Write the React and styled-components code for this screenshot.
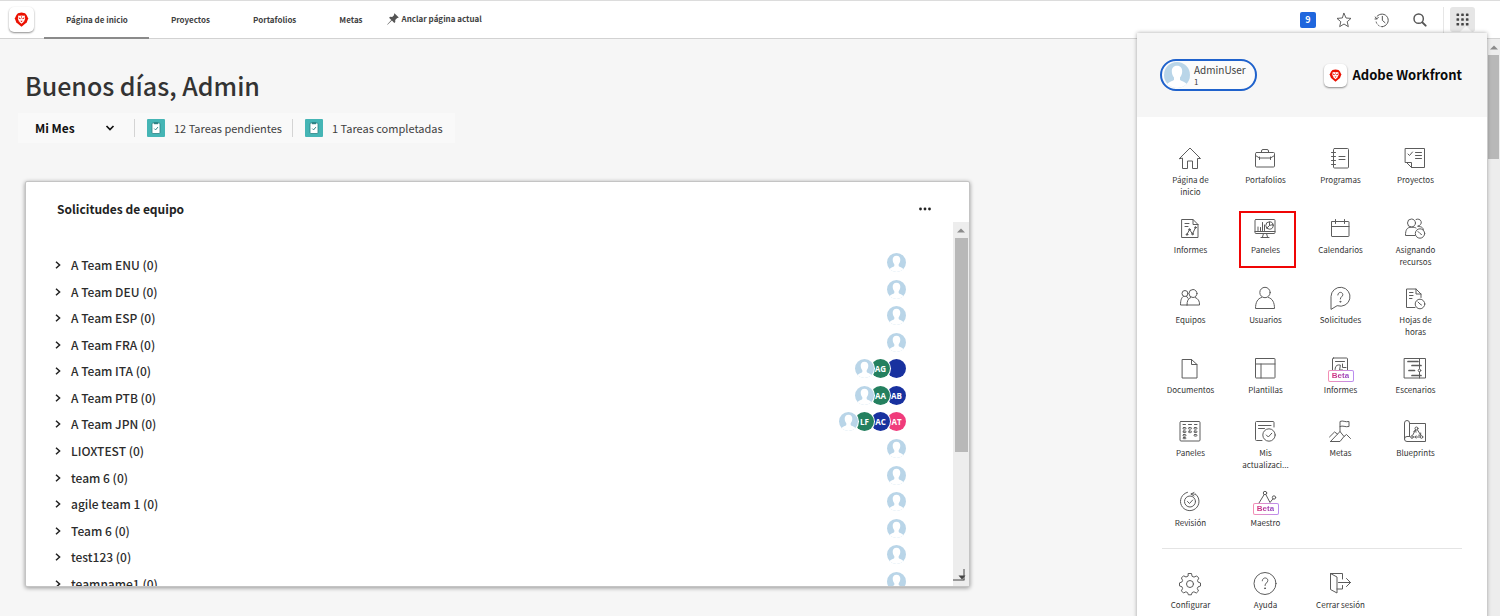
import React from 'react';
import styled, { createGlobalStyle } from 'styled-components';

const GlobalStyle = createGlobalStyle`
  *, *::before, *::after { box-sizing: border-box; }
  html, body { height: 100%; overflow: hidden; }
  body {
    margin: 0;
    background: #f6f6f6;
    color: #3f3f3f;
    font-family: "Noto Sans CJK SC", "Noto Sans", sans-serif;
    font-size: 13px;
  }
  #root { height: 100%; }
  button, select { font: inherit; color: inherit; background: none; border: 0; padding: 0; margin: 0; cursor: pointer; }
  a { color: inherit; text-decoration: none; }
  ul { list-style: none; margin: 0; padding: 0; }
  h1, h2, p { margin: 0; }
  svg { display: block; }
`;

const Page = styled.div`
  display: flex;
  flex-direction: column;
  height: 100%;
`;

/* ---------- top bar ---------- */

const TopBar = styled.header`
  display: flex;
  align-items: center;
  flex: none;
  height: 39px;
  padding: 0 25px 0 9px;
  background: #fff;
  border-top: 1px solid #dcdcdc;
  border-bottom: 1px solid #d2d2d2;
`;

const LogoTile = styled.span`
  display: flex;
  align-items: center;
  justify-content: center;
  flex: none;
  width: ${(p) => p.$size}px;
  height: ${(p) => p.$size}px;
  border-radius: 5px;
  background: #fff;
  box-shadow: 0 1px 2px rgba(0, 0, 0, 0.45);
`;

const Tabs = styled.nav`
  display: flex;
  align-self: stretch;
  margin-left: 10px;
`;

const Tab = styled.a`
  display: flex;
  align-items: center;
  height: 38px;
  padding: 1px 21px 0 22px;
  font-size: 8px;
  font-weight: 700;
  white-space: nowrap;
  border-bottom: 2px solid ${(p) => (p.$active ? '#8a8a8a' : 'transparent')};
`;

const PinButton = styled.button`
  display: flex;
  align-items: center;
  gap: 3px;
  margin-left: 3px;
  padding-bottom: 2px;
  font-size: 8px;
  font-weight: 700;
  line-height: 16px;
  white-space: nowrap;
`;

const Tools = styled.div`
  display: flex;
  align-items: center;
  align-self: stretch;
  margin-left: auto;
`;

const Badge = styled.button`
  width: 16px;
  height: 16px;
  margin-right: 20px;
  border-radius: 2px;
  background: #1f66dd;
  color: #fff;
  font-size: 9px;
  font-weight: 700;
  line-height: 16px;
`;

const ToolButton = styled.button`
  display: flex;
  align-items: center;
  justify-content: center;
  width: 16px;
  height: 16px;
  margin-right: ${(p) => p.$gap}px;
  color: #555;
`;

const ToolRule = styled.span`
  align-self: flex-end;
  width: 1px;
  height: 31px;
  margin-right: 6px;
  background: #e6e6e6;
`;

const AppsButton = styled.button`
  position: relative;
  display: flex;
  align-items: center;
  justify-content: center;
  width: 25px;
  height: 25px;
  border-radius: 3px;
  background: #e6e6e6;
  color: #444;

  &::after {
    content: '';
    position: absolute;
    right: 3px;
    bottom: 0;
    border: 6px solid transparent;
    border-top: 0;
    border-bottom-color: #f7f7f7;
  }
`;

/* ---------- home page ---------- */

const Body = styled.div`
  display: flex;
  flex: 1;
  min-height: 0;
`;

const Main = styled.main`
  flex: 1;
  min-width: 0;
  padding: 26px 0 30px 25px;
`;

const Greeting = styled.h1`
  font-size: 25px;
  font-weight: 500;
  line-height: 40px;
  color: #333;
`;

const Stats = styled.div`
  display: flex;
  align-items: center;
  width: fit-content;
  height: 30px;
  margin: 8px 0 0 -7px;
  padding: 0 12px 0 17px;
  background: #f9f9f9;
`;

const PeriodField = styled.label`
  position: relative;
  width: 80px;
  height: 20px;
  color: #111;

  svg { position: absolute; right: 0; top: 5px; pointer-events: none; }
`;

const PeriodSelect = styled.select`
  width: 80px;
  height: 20px;
  appearance: none;
  font-size: 12px;
  font-weight: 700;
  line-height: 20px;
`;

const Stat = styled.div`
  display: flex;
  align-items: center;
  gap: 9px;
  height: 18px;
  margin-left: ${(p) => p.$gap}px;
  padding-left: 12px;
  border-left: 1px solid #d4d4d4;
  font-size: 11px;
  line-height: 18px;
`;

const Card = styled.section`
  display: flex;
  flex-direction: column;
  width: 63vw;
  height: 406px;
  margin-top: 38px;
  border: 1px solid #c4c4c4;
  border-radius: 2px;
  background: #fff;
  box-shadow: 0 1px 4px rgba(0, 0, 0, 0.4);
`;

const CardHeader = styled.div`
  display: flex;
  align-items: center;
  justify-content: space-between;
  height: 40px;
  padding: 14px 38px 0 31px;
`;

const CardTitle = styled.h2`
  font-size: 12px;
  font-weight: 700;
  line-height: 20px;
  color: #222;
`;

const MoreButton = styled.button`
  display: flex;
  align-items: center;
  height: 20px;
  color: #222;
`;

const Scroller = styled.div`
  position: relative;
  display: flex;
  flex: 1;
  min-height: 0;
`;

const ListViewport = styled.div`
  flex: 1;
  overflow: hidden;
`;

const TeamList = styled.ul`
  display: grid;
  grid-auto-rows: 1fr;
  height: 375px;
  padding: 30px 47px 0 29px;
`;

const TeamRow = styled.li`
  display: flex;
  align-items: center;
  justify-content: space-between;
`;

const TeamToggle = styled.button`
  display: flex;
  align-items: center;
  gap: 10px;
  font-size: 12px;
  font-weight: 500;
  line-height: 20px;
  color: #2c2c2c;
`;

const Avatars = styled.div`
  display: flex;
  flex-direction: row-reverse;
  align-items: center;
  padding-bottom: 5px;
`;

const Avatar = styled.span`
  position: relative;
  display: flex;
  align-items: center;
  justify-content: center;
  flex: none;
  width: 19px;
  height: 19px;
  border-radius: 50%;
  background: ${(p) => p.$color || '#fff'};
  box-shadow: 0 0 0 1px #fff;
  color: #fff;
  font-family: "Open Sans", sans-serif;
  font-size: 8px;
  font-weight: 700;

  & + & { margin-right: -3px; }
`;

const Bar = styled.div`
  display: flex;
  flex-direction: column;
  align-items: center;
  flex: none;
  width: ${(p) => p.$width}px;
  background: #ededed;
  color: #8b8b8b;
`;

const BarArrow = styled.span`
  display: flex;
  align-items: center;
  justify-content: center;
  height: 16px;
`;

const BarThumb = styled.span`
  width: ${(p) => p.$width}px;
  height: ${(p) => p.$height};
  background: #b8b8b8;
`;

const ResizeGrip = styled.span`
  position: absolute;
  right: 3px;
  bottom: 5px;
  color: #444;
`;

/* ---------- main menu ---------- */

const MenuPanel = styled.aside`
  position: absolute;
  top: 33px;
  right: 13px;
  width: 350px;
  min-height: calc(100% - 33px);
  background: #fff;
  box-shadow: 0 0 4px rgba(0, 0, 0, 0.35);
`;

const MenuHeader = styled.div`
  display: flex;
  align-items: center;
  justify-content: space-between;
  height: 84px;
  padding: 0 25px 0 23px;
  background: #f6f6f6;
`;

const UserButton = styled.button`
  display: flex;
  align-items: center;
  gap: 4px;
  width: 97px;
  height: 32px;
  padding: 0 2px;
  border: 2px solid #1f62cc;
  border-radius: 16px;
  background: #fbfbfb;
  text-align: left;
`;

const UserName = styled.span`
  display: flex;
  flex-direction: column;
  font-size: 10px;
  line-height: 12px;
`;

const UserDetail = styled.span`
  font-size: 8px;
  line-height: 11px;
`;

const Brand = styled.div`
  display: flex;
  align-items: center;
  gap: 5px;
  font-size: 13px;
  font-weight: 700;
  line-height: 20px;
  color: #0a0a0a;
  white-space: nowrap;
`;

const MenuGrid = styled.nav`
  display: grid;
  grid-template-columns: repeat(4, 75px);
  row-gap: 16px;
  padding: ${(p) => p.$top}px 34px 14px 16px;
`;

const MenuItem = styled.a`
  position: relative;
  display: flex;
  flex-direction: column;
  align-items: center;
  gap: 2px;
`;

const MenuIcon = styled.span`
  position: relative;
  display: flex;
  align-items: center;
  justify-content: center;
  height: 28px;
  color: #5c5c5c;
`;

const MenuLabel = styled.span`
  min-height: 17px;
  max-width: ${(p) => (p.$wide ? 70 : 50)}px;
  font-size: 8px;
  line-height: 12px;
  text-align: center;
  color: #333;
`;

const Beta = styled.span`
  position: absolute;
  left: 50%;
  bottom: 0;
  width: 26px;
  height: 12px;
  margin-left: -13px;
  border: 1px solid transparent;
  border-radius: 2px;
  background: linear-gradient(#fff, #fff) padding-box, linear-gradient(90deg, #f58fb4, #b98cf0) border-box;
  font-family: "Liberation Sans", sans-serif;
  font-size: 8px;
  font-weight: 700;
  line-height: 10px;
  text-align: center;

  span {
    background: linear-gradient(90deg, #d8317a, #8d46c8);
    background-clip: text;
    color: transparent;
  }
`;

const Highlight = styled.span`
  position: absolute;
  top: -3px;
  left: 11px;
  width: 57px;
  height: 57px;
  border: 2px solid #f00505;
`;

const MenuRule = styled.hr`
  height: 1px;
  margin: 0 25px;
  border: 0;
  background: #e4e4e4;
`;

/* ---------- drawings ---------- */

const Line = ({ size = 24, width = 1, box = '0 0 24 24', children }) => (
  <svg width={size} height={size} viewBox={box} overflow="visible" fill="none" stroke="currentColor" strokeWidth={width} strokeLinejoin="round" strokeLinecap="round" aria-hidden="true">
    {children}
  </svg>
);

const Lion = ({ size }) => (
  <svg width={size} height={size} viewBox="0 0 16 16" aria-hidden="true">
    <path d="M4.200 1.200 8 .6l3.800.6 1.600 1.900 1.800 3.700-1.700 4.400L8 15.600l-5.500-4.400L.8 6.800l1.800-3.700z" fill="#eb1000" />
    <path d="M4.600 3.800 6 4.100 8 3.600l2 .5 1.400-.3.500 3-1.100 3.400L8 12.600l-2.800-2.400-1.100-3.400z" fill="#fff" />
    <path d="M4.900 5.600l2.200 1-.2 1.200-1.800-.8zM11.100 5.600l-2.200 1 .2 1.200 1.800-.8zM6.700 9.300h2.600L8 10.800zM7.700 4h.6v2.800h-.6zM5 8.600l1 1.800-.9-.5zM11 8.600l-1 1.800.9-.5z" fill="#eb1000" />
  </svg>
);

const Silhouette = ({ size, full }) => (
  <svg width={size} height={size} viewBox="0 0 20 20" aria-hidden="true">
    <defs>
      <clipPath id={full ? 'disc-full' : 'disc'}><circle cx="10" cy="10" r="10" /></clipPath>
    </defs>
    <g clipPath={`url(#${full ? 'disc-full' : 'disc'})`}>
      <rect width="20" height="20" fill="#b9d5e8" />
      <path d="M10 2.800c-2.900 0-4 2-4 4.400 0 2 .7 3.600 1.700 4.700v1.800c-.7 1-3.700 1.500-5.700 3.600V20h16v-2.700c-2-2.100-5-2.600-5.700-3.600v-1.800c1-1.100 1.700-2.700 1.700-4.700 0-2.400-1.100-4.400-4-4.400z" fill="#fff" />
    </g>
  </svg>
);

const Clipboard = () => (
  <svg width="18" height="18" viewBox="0 0 18 18" aria-hidden="true">
    <rect width="18" height="18" rx="1" fill="#45b5b5" />
    <rect x="5" y="4" width="8" height="10.500" rx="1" fill="#fff" stroke="#2f8183" strokeWidth=".8" />
    <rect x="7" y="3.200" width="4" height="2" fill="#2f8183" />
    <path d="M7.300 9.600l1.300 1.300 2.300-2.800" fill="none" stroke="#2f8183" strokeWidth="1" />
  </svg>
);

const Pin = () => (
  <svg width="12" height="12" viewBox="0 0 12 12" aria-hidden="true">
    <path d="M7.400.2l4.400 4.400-1.100.4-.5-.1-2 2 .1 2-1 1L4.900 7.600.5 11.700l-.3-.3L4.300 7 2.100 4.700l1-1 2.100.2 2-2L7 1.200z" fill="#555" />
  </svg>
);

const Triangle = () => (
  <svg width="8" height="5" viewBox="0 0 8 5" aria-hidden="true"><path d="M0 4.500 4 .5l4 4z" fill="currentColor" /></svg>
);

const Dots = () => (
  <svg width="12" height="4" viewBox="0 0 12 4" aria-hidden="true">
    {[1.500, 6, 10.500].map((x) => <circle key={x} cx={x} cy="2" r="1.400" fill="currentColor" />)}
  </svg>
);

const AppDots = () => (
  <svg width="13" height="13" viewBox="0 0 13 13" aria-hidden="true">
    {[0.500, 5.200, 9.900].map((y) => [0.500, 5.200, 9.900].map((x) => <rect key={`${x}-${y}`} x={x} y={y} width="2.600" height="2.600" rx=".6" fill="currentColor" />))}
  </svg>
);

const Chevron = () => (
  <svg width="6" height="8" viewBox="0 0 6 8" fill="none" stroke="#222" strokeWidth="1.500" aria-hidden="true"><path d="M1 .7 4.600 4 1 7.300" /></svg>
);

const icons = {
  home: <><path d="M2.500 12.500 13 2l10.500 10.500h-3v10h-5V15h-5v7.500h-5v-10z" /></>,
  briefcase: <><rect x="3.500" y="6.500" width="19" height="14.500" rx="1" /><path d="M9.500 6.500V5A1.500 1.500 0 0 1 11 3.500h4A1.500 1.500 0 0 1 16.500 5v1.500M3.500 9.500l4 2.500h11l4-2.500M7.500 11v2.500M18.500 11v2.500" /></>,
  notebook: <><rect x="6.500" y="2.500" width="15" height="19.500" rx="1" /><path d="M4.500 6.500h4M4.500 10.500h4M4.500 14.500h4M4.500 18.500h4M12 10.500h6M12 13.500h6" /></>,
  project: <><path d="M3.500 2.500h19v19H9.500l-5-5h-1z" /><path d="M4.500 16.500h5v5M6 8l1.500 1.500L10.500 6M13.500 6.500h6M13.500 9.500h6M13.500 12.500h6" /></>,
  report: <><path d="M5 3.500h11l5 5V21.500H5zM16 3.500v5h5M8 7.500h4M8 10.500h3" /><path d="M10 18.500l2.500-5 3 4.500 3-6.500" /><g fill="currentColor"><circle cx="10" cy="18.500" r=".8" /><circle cx="12.500" cy="13.500" r=".8" /><circle cx="15.500" cy="18" r=".8" /><circle cx="18.500" cy="11.500" r=".8" /></g></>,
  dashboard: <><rect x="3" y="3.500" width="20" height="14" rx="1" /><path d="M3 15.500h20M6 14.500V11M8.500 14.500v-3M10.500 14.500V6.500M12.500 14.500V9M11.500 17.500 10.500 21M14.500 17.500l1 3.500M9 21.500h8" /><circle cx="17.500" cy="9.500" r="3.700" /><path d="M17.500 6v3.500l3.500-1M17.500 9.500l-2.700 2.600" /></>,
  calendar: <><rect x="4.500" y="5.500" width="17.500" height="15" rx=".5" /><path d="M4.500 10.500h17.500M8.500 3.500v4M17.500 3.500v4" /></>,
  resourcing: <><circle cx="9.500" cy="7" r="4" /><path d="M14 3.500a3.500 3.500 0 1 1 2 6.500M14 12c-1-.7-2.200-.8-4.500-.8-4.500 0-6 2.500-6 8.300h9.500M16 10.500c3 0 5 .5 5.500 3.500" /><circle cx="18" cy="17.500" r="4.700" /><path d="M16 15.500l2 2 1.500 1" /></>,
  teams: <><circle cx="8" cy="7.500" r="3" /><circle cx="16" cy="7.500" r="4" /><path d="M10 19h12.500c.3-4-1.500-6.500-4.200-7.500M13.700 11.500C11 12.500 10 15 10 19M6.500 10.300C4.500 11.500 3.500 14 3.500 19H10M9.500 10.300l1.500 2" /></>,
  user: <><circle cx="13" cy="6.500" r="5.200" /><path d="M9.500 11.500C5.500 12.500 3.500 16.500 3.500 22.500h19c0-6-2-10-6-11" /></>,
  request: <><path d="M4 23V10.500A9.500 9.500 0 1 1 10.500 19.800z" /><path d="M10.800 9c0-3.500 5-3.500 5-.3 0 2-2.500 2-2.500 4.300" /><circle cx="13.300" cy="15.700" r=".5" fill="currentColor" /></>,
  timesheet: <><path d="M13 21.500H4.500V3H14l5 5v3.500M14 3v5h5M7.500 6.500H11M7.500 9.500H11M7.500 12.500h2.500" /><circle cx="18" cy="18" r="4.800" /><path d="M16 16l2 2 1.500 1" /></>,
  document: <path d="M5.500 3.500h9l5.500 5v13.500h-14.500zM14.500 3.500v5H20" />,
  template: <><rect x="3.500" y="2.500" width="19.500" height="19.500" rx=".5" /><path d="M3.500 8h19.500M9 8v14" /></>,
  canvas: <><rect x="5.500" y="2" width="15" height="20" rx="1" /><path d="M8.500 5.500h9M13 9a4 4 0 1 0 3 5h-3zM15.500 8v3.500H19" /></>,
  scenario: <><rect x="2.500" y="2.500" width="21" height="19.500" /><path d="M17.500 2.500v10M17.500 16v6" /><circle cx="17.500" cy="14.500" r="1.300" /><path strokeWidth="1.700" d="M6 5.500h10M10 9.500h9M7 14.500h5.500M10 19.500h9" /></>,
  boards: <><rect x="3" y="2.500" width="20" height="19.500" rx="1" /><path d="M6 5.500h2.500M11.500 5.500h3M17.500 5.500H20" /><g strokeWidth="1"><rect x="6" y="8.500" width="3" height="1.600" rx=".8" /><rect x="11.500" y="8.500" width="3" height="1.600" rx=".8" /><rect x="17" y="8.500" width="3" height="1.600" rx=".8" /><rect x="6" y="12" width="3" height="1.600" rx=".8" /><rect x="11.500" y="12" width="3" height="1.600" rx=".8" /><rect x="17" y="12" width="3" height="1.600" rx=".8" /><rect x="6" y="15.500" width="3" height="1.600" rx=".8" /><rect x="17" y="15.500" width="3" height="1.600" rx=".8" /><rect x="6" y="18.500" width="3" height="1.200" rx=".6" /></g></>,
  updates: <><path d="M10 21.500H4.500a1 1 0 0 1-1-1v-17a1 1 0 0 1 1-1h16.500a1 1 0 0 1 1 1V8M6.500 6.500h12.500M6.500 9.500h6" /><circle cx="17" cy="16" r="6.200" /><path d="M14.300 16l2 2 3.500-3.800" /></>,
  goals: <><path d="M13 12.500V2.500c3-1.500 5 1 9 0v5c-4 1-6-1.500-9 0M2.500 18l5-5 3 2M3.500 22.500 13 12.500l4 5 2.500-2 4 4M3.500 22.500h9.500l4-5" /></>,
  blueprint: <><path d="M7.500 4.500h16v18H5a2.500 2.500 0 0 1 0-5h2.500M2.500 20V4a2.500 2.500 0 0 1 5 0v13.500" /><circle cx="14.500" cy="9.500" r="1.500" /><circle cx="10" cy="18" r="1.300" /><circle cx="19.500" cy="18" r="1.300" /><path d="M13.500 11l-2.700 5M15.500 11l3.200 5M13 18h4.500M14 16.800 12.800 18l1.200 1.200M11.600 12.600l1.900-1.600.5 2.200M18.700 14v2.200h-2" /></>,
  review: <><path d="M10.500 3.300A9.300 9.300 0 1 0 18.500 5M17 3.500l-3 1.500 3 2M14 5c2-.3 3.500 0 4.500.6" /><circle cx="13" cy="12.500" r="5.500" /><path d="M10.500 12.500l2 2 3.200-3.500" /></>,
  maestro: <><circle cx="13" cy="4" r="1.700" /><circle cx="22" cy="8.500" r="1.700" /><path d="M12.200 5.500 7 14M13.800 5.500l4.200 8 3-3.700" /></>,
  settings: <><path d="M11.500 2.500h3l.6 2.800 1.900.8 2.700-1.200 2.100 2.200-1.300 2.500.6 1.500 2.400.9v3l-2.500.9-.7 1.600 1.200 2.500-2.200 2-2.400-1.200-1.800.8-.7 2.200h-3l-.8-2.200-1.700-.8-2.400 1.200-2.100-2.100 1.200-2.500-.7-1.700-2.400-.8v-3l2.400-.9.700-1.600-1.200-2.400 2.100-2.200 2.500 1.200 1.800-.8z" /><circle cx="13" cy="13" r="3.500" /></>,
  help: <><circle cx="13" cy="12.500" r="11" /><path d="M10.300 9.800c0-3.800 5.500-3.800 5.500-.3 0 2.300-2.800 2.500-2.800 5" /><circle cx="13" cy="17.300" r=".5" fill="currentColor" /></>,
  logout: <><path d="M15.500 8V2.500H3.500v16l6.500 3.500V6L3.500 2.500M10 18h5.500v-3.500M11.500 11.500H23.500M19.500 7.500l4 4-4 4" /></>,
};

/* ---------- data ---------- */

const GREEN = '#24805f';
const BLUE = '#18319f';
const PINK = '#f03c7c';

const teams = [
  { name: 'A Team ENU (0)' },
  { name: 'A Team DEU (0)' },
  { name: 'A Team ESP (0)' },
  { name: 'A Team FRA (0)' },
  { name: 'A Team ITA (0)', people: [['', BLUE], ['AG', GREEN]] },
  { name: 'A Team PTB (0)', people: [['AB', BLUE], ['AA', GREEN]] },
  { name: 'A Team JPN (0)', people: [['AT', PINK], ['AC', BLUE], ['LF', GREEN]] },
  { name: 'LIOXTEST (0)' },
  { name: 'team 6 (0)' },
  { name: 'agile team 1 (0)' },
  { name: 'Team 6 (0)' },
  { name: 'test123 (0)' },
  { name: 'teamname1 (0)' },
];

const menu = [
  ['home', 'Página de inicio'],
  ['briefcase', 'Portafolios'],
  ['notebook', 'Programas'],
  ['project', 'Proyectos'],
  ['report', 'Informes'],
  ['dashboard', 'Paneles', { highlight: true }],
  ['calendar', 'Calendarios'],
  ['resourcing', 'Asignando recursos'],
  ['teams', 'Equipos'],
  ['user', 'Usuarios'],
  ['request', 'Solicitudes'],
  ['timesheet', 'Hojas de horas'],
  ['document', 'Documentos'],
  ['template', 'Plantillas'],
  ['canvas', 'Informes', { beta: true }],
  ['scenario', 'Escenarios'],
  ['boards', 'Paneles'],
  ['updates', 'Mis actualizaci...'],
  ['goals', 'Metas'],
  ['blueprint', 'Blueprints'],
  ['review', 'Revisión'],
  ['maestro', 'Maestro', { beta: true }],
];

const footerMenu = [
  ['settings', 'Configurar'],
  ['help', 'Ayuda'],
  ['logout', 'Cerrar sesión'],
];

const MenuEntry = ({ icon, label, highlight, beta, wide }) => (
  <MenuItem href="#">
    <MenuIcon>
      <Line box="2 0 24 24">{icons[icon]}</Line>
      {beta && <Beta><span>Beta</span></Beta>}
    </MenuIcon>
    <MenuLabel $wide={wide}>{label}</MenuLabel>
    {highlight && <Highlight />}
  </MenuItem>
);

export default function App() {
  return (
    <Page>
      <GlobalStyle />
      <TopBar>
        <LogoTile $size={25}><Lion size={15} /></LogoTile>
        <Tabs>
          <Tab href="#" $active>Página de inicio</Tab>
          <Tab href="#">Proyectos</Tab>
          <Tab href="#">Portafolios</Tab>
          <Tab href="#">Metas</Tab>
        </Tabs>
        <PinButton><Pin />Anclar página actual</PinButton>
        <Tools>
          <Badge aria-label="9 notificaciones">9</Badge>
          <ToolButton $gap={22} aria-label="Favoritos">
            <Line size={16} width={1.4}><path d="M12 2l3 7 7.500.6-5.700 5 1.700 7.400L12 18l-6.500 4 1.700-7.400-5.700-5L9 9z" /></Line>
          </ToolButton>
          <ToolButton $gap={22} aria-label="Recientes">
            <Line size={16} width={1.5}><path d="M4.500 6.500A9.500 9.500 0 1 1 12.500 22M1.500 10.500l2.500 0 2.500-2.500M4 10.500l-2-3M12.500 6.500V12.500l4 3.500" /><path strokeDasharray="2 3" d="M12.500 22A9.500 9.500 0 0 1 3 13" /></Line>
          </ToolButton>
          <ToolButton $gap={15} aria-label="Buscar">
            <Line size={16} width={2.200}><circle cx="10" cy="10" r="7" /><path strokeWidth="3" d="M15.500 15.500l5 5" /></Line>
          </ToolButton>
          <ToolRule />
          <AppsButton aria-label="Menú principal"><AppDots /></AppsButton>
        </Tools>
      </TopBar>

      <Body>
        <Main>
          <Greeting>Buenos días, Admin</Greeting>
          <Stats>
            <PeriodField>
              <PeriodSelect aria-label="Periodo" defaultValue="mes">
                <option value="mes">Mi Mes</option>
              </PeriodSelect>
              <svg width="10" height="10" viewBox="0 0 10 10" fill="none" stroke="currentColor" strokeWidth="1.700" aria-hidden="true"><path d="M1.500 3 5 6.500 8.500 3" /></svg>
            </PeriodField>
            <Stat $gap={19}><Clipboard />12 Tareas pendientes</Stat>
            <Stat $gap={10}><Clipboard />1 Tareas completadas</Stat>
          </Stats>

          <Card>
            <CardHeader>
              <CardTitle>Solicitudes de equipo</CardTitle>
              <MoreButton aria-label="Más"><Dots /></MoreButton>
            </CardHeader>
            <Scroller>
              <ListViewport>
                <TeamList>
                  {teams.map((team) => (
                    <TeamRow key={team.name}>
                      <TeamToggle><Chevron />{team.name}</TeamToggle>
                      <Avatars>
                        {(team.people || []).map(([initials, color]) => (
                          <Avatar key={color} $color={color}>{initials}</Avatar>
                        ))}
                        <Avatar><Silhouette size={19} /></Avatar>
                      </Avatars>
                    </TeamRow>
                  ))}
                </TeamList>
              </ListViewport>
              <Bar $width={16}>
                <BarArrow><Triangle /></BarArrow>
                <BarThumb $width={13} $height="214px" />
              </Bar>
              <ResizeGrip>
                <svg width="13" height="12" viewBox="0 0 13 12" aria-hidden="true"><path d="M0 11h11.500M11 0v11" fill="none" stroke="currentColor" /><path d="M5.500 6.500h7L9 10.500z" fill="currentColor" /></svg>
              </ResizeGrip>
            </Scroller>
          </Card>
        </Main>
        <Bar $width={13}>
          <BarArrow><Triangle /></BarArrow>
          <BarThumb $width={11} $height="18%" />
        </Bar>
      </Body>

      <MenuPanel>
        <MenuHeader>
          <UserButton>
            <Silhouette size={26} full />
            <UserName>AdminUser<UserDetail>1</UserDetail></UserName>
          </UserButton>
          <Brand><LogoTile $size={23}><Lion size={13} /></LogoTile>Adobe Workfront</Brand>
        </MenuHeader>
        <MenuGrid $top={27}>
          {menu.map(([icon, label, extra]) => <MenuEntry key={icon} icon={icon} label={label} {...extra} />)}
        </MenuGrid>
        <MenuRule />
        <MenuGrid $top={20}>
          {footerMenu.map(([icon, label]) => <MenuEntry key={icon} icon={icon} label={label} wide />)}
        </MenuGrid>
      </MenuPanel>
    </Page>
  );
}
